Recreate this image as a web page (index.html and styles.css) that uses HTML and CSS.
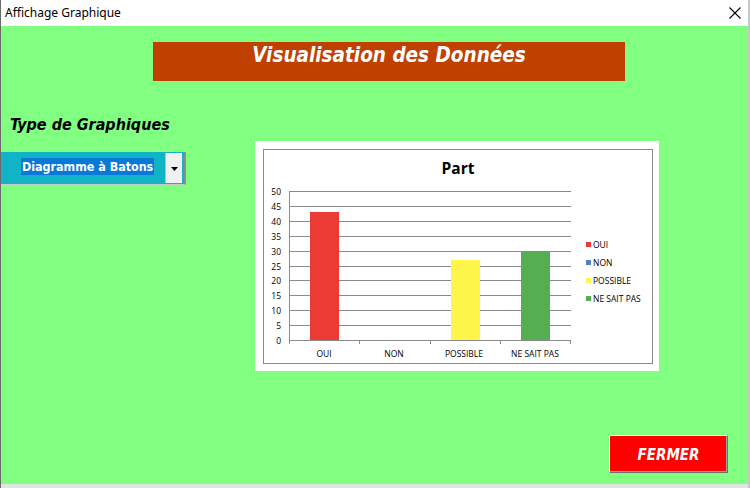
FILE: index.html
```html
<!DOCTYPE html>
<html lang="fr">
<head>
<meta charset="utf-8">
<title>Affichage Graphique</title>
<link rel="stylesheet" href="styles.css">
</head>
<body>
<div class="window">
  <div class="titlebar">
    <span class="title">Affichage Graphique</span>
    <svg class="close" width="12" height="12" viewBox="0 0 12 12"><path d="M0.5 0.5L11.5 11.5M11.5 0.5L0.5 11.5" stroke="#000" stroke-width="1.1" fill="none"/></svg>
  </div>
  <div class="client">
    <div class="banner">Visualisation des Données</div>
    <div class="label">Type de Graphiques</div>
    <div class="row">
      <div class="combo">
        <div class="combo-text"><span class="sel">Diagramme à Batons</span></div>
        <div class="combo-btn"><svg width="7" height="4" viewBox="0 0 7 4"><path d="M0 0H7L3.5 4Z" fill="#000"/></svg></div>
      </div>
      <div class="chart-frame">
        <div class="chart">
          <svg width="388" height="214" viewBox="0 0 388 214" font-family="'Open Sans','Noto Sans',sans-serif">
            <text x="194" y="24" text-anchor="middle" font-size="15.5" font-weight="bold" fill="#000">Part</text>
            <g stroke="#8a8a8a" stroke-width="1">
              <line x1="25" y1="41.5" x2="307" y2="41.5"/>
              <line x1="25" y1="56.5" x2="307" y2="56.5"/>
              <line x1="25" y1="71.5" x2="307" y2="71.5"/>
              <line x1="25" y1="86.5" x2="307" y2="86.5"/>
              <line x1="25" y1="101.5" x2="307" y2="101.5"/>
              <line x1="25" y1="116.5" x2="307" y2="116.5"/>
              <line x1="25" y1="130.5" x2="307" y2="130.5"/>
              <line x1="25" y1="145.5" x2="307" y2="145.5"/>
              <line x1="25" y1="160.5" x2="307" y2="160.5"/>
              <line x1="25" y1="175.5" x2="307" y2="175.5"/>
              <line x1="25" y1="190.5" x2="307" y2="190.5"/>
              <line x1="25.5" y1="41" x2="25.5" y2="190"/>
              <line x1="25.5" y1="190" x2="25.5" y2="194"/>
              <line x1="95.5" y1="190" x2="95.5" y2="194"/>
              <line x1="166.5" y1="190" x2="166.5" y2="194"/>
              <line x1="236.5" y1="190" x2="236.5" y2="194"/>
              <line x1="306.5" y1="190" x2="306.5" y2="194"/>
            </g>
            <g font-size="8.5" fill="#000" text-anchor="end">
              <text x="17" y="44.5">50</text>
              <text x="17" y="59.5">45</text>
              <text x="17" y="74.5">40</text>
              <text x="17" y="89.5">35</text>
              <text x="17" y="104.5">30</text>
              <text x="17" y="119.5">25</text>
              <text x="17" y="133.5">20</text>
              <text x="17" y="148.5">15</text>
              <text x="17" y="163.5">10</text>
              <text x="17" y="178.5">5</text>
              <text x="17" y="193.5">0</text>
            </g>
            <rect x="46" y="62" width="29" height="128" fill="#ec3a35"/>
            <rect x="187" y="110" width="29" height="80" fill="#fff64c"/>
            <rect x="257" y="101" width="29" height="89" fill="#55ae52"/>
            <g font-size="8.5" fill="#000" text-anchor="middle">
              <text x="60" y="207">OUI</text>
              <text x="130" y="207">NON</text>
              <text x="200" y="207">POSSIBLE</text>
              <text x="271" y="207">NE SAIT PAS</text>
            </g>
            <g font-size="8.5" fill="#000">
              <rect x="322" y="92" width="5" height="5" fill="#ec3a35"/>
              <text x="329" y="98">OUI</text>
              <rect x="322" y="110" width="5" height="5" fill="#4f81bd"/>
              <text x="329" y="116">NON</text>
              <rect x="322" y="128" width="5" height="5" fill="#fff64c"/>
              <text x="329" y="134">POSSIBLE</text>
              <rect x="322" y="146" width="5" height="5" fill="#55ae52"/>
              <text x="329" y="152">NE SAIT PAS</text>
            </g>
          </svg>
        </div>
      </div>
    </div>
    <div class="footer">
      <button class="btn-close" type="button">FERMER</button>
    </div>
  </div>
  <div class="bottom"></div>
</div>
</body>
</html>
```

FILE: styles.css
```css
* { box-sizing: border-box; }
html, body {
  margin: 0;
  padding: 0;
  width: 750px;
  height: 488px;
  overflow: hidden;
  background: #f0f0f0;
}
.window {
  display: flex;
  flex-direction: column;
  width: 750px;
  height: 488px;
  border-left: 1px solid #6a6a6a;
  border-right: 2px solid #c8c8c8;
}
.titlebar {
  height: 26px;
  background: #fff;
  display: flex;
  align-items: center;
  justify-content: space-between;
  padding: 0 7px 0 4px;
  font-family: "Noto Sans", "Open Sans", sans-serif;
  font-size: 12px;
  color: #000;
}
.title { margin-top: -1px; }
.close { display: block; }
.client {
  flex: 1;
  background: #80ff80;
  display: flex;
  flex-direction: column;
  padding-top: 16px;
}
.bottom {
  height: 4px;
  background: #e3e3e3;
}
.banner {
  margin-left: 152px;
  width: 472px;
  height: 39px;
  background: #c04000;
  color: #fff;
  font-family: "DejaVu Sans Condensed", "DejaVu Sans", sans-serif;
  font-weight: bold;
  font-style: italic;
  font-size: 20.5px;
  line-height: 26px;
  text-align: center;
  padding-top: 0;
}
.label {
  margin: 34px 0 0 9px;
  font-family: "DejaVu Sans Condensed", "DejaVu Sans", sans-serif;
  font-weight: bold;
  font-style: italic;
  font-size: 16px;
  line-height: 20px;
  color: #000;
}
.row {
  display: flex;
  align-items: flex-start;
  margin-top: 6px;
}
.combo {
  margin-top: 11px;
  width: 185px;
  height: 33px;
  background: #10b4c6;
  border-right: 2px solid #8c8c8c;
  border-bottom: 1px solid #c8c8c8;
  display: flex;
  align-items: center;
  justify-content: space-between;
  padding: 0 2px 0 20px;
}
.combo-text {
  font-family: "DejaVu Sans Condensed", "DejaVu Sans", sans-serif;
  font-weight: bold;
  font-size: 12.4px;
  line-height: 17px;
  color: #fff;
  white-space: nowrap;
  margin-top: -3px;
}
.sel { background: #0a78d7; display: inline-block; padding: 0 1px; }
.combo-btn {
  width: 17px;
  height: 30px;
  background: #f0f0f0;
  border-left: 1px solid #bdbdbd;
  display: flex;
  align-items: center;
  justify-content: center;
}
.combo-btn svg { display: block; margin-top: 2px; }
.chart-frame {
  margin-left: 69px;
  width: 404px;
  height: 230px;
  background: #fff;
  padding: 8px 7px 7px 8px;
}
.chart {
  width: 390px;
  height: 215px;
  border: 1px solid #8a8a8a;
}
.chart svg { display: block; }
.footer {
  display: flex;
  justify-content: flex-end;
  margin-top: 64px;
  padding-right: 20px;
}
.btn-close {
  width: 119px;
  height: 38px;
  background: #ff0000;
  border: 1px solid;
  border-color: #f4f4f4 #707070 #707070 #f4f4f4;
  box-shadow: inset -1px -1px 0 #a0a0a0;
  color: #fff;
  font-family: "DejaVu Sans Condensed", "DejaVu Sans", sans-serif;
  font-weight: bold;
  font-style: italic;
  font-size: 15px;
  padding: 2px 0 0 0;
}
```
